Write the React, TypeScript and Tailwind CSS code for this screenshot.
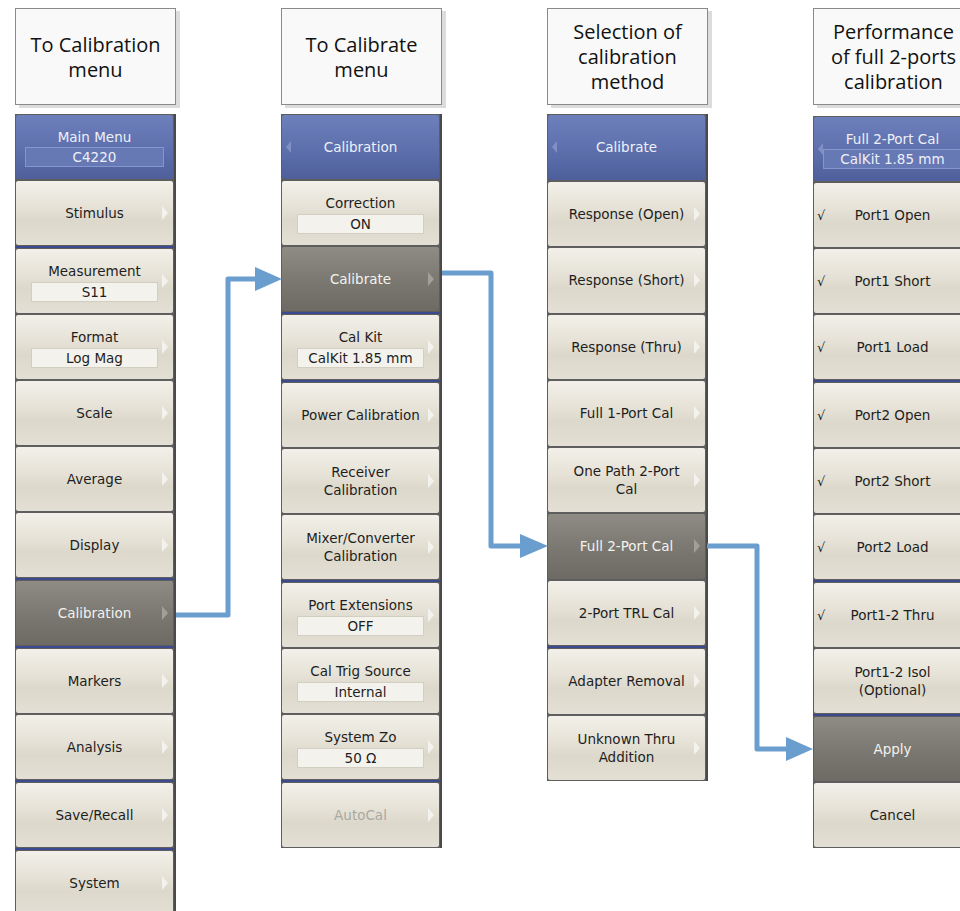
import React from "react";

type Kind = "beige" | "blue" | "dark" | "disabled";
interface Item {
  label?: string;
  value?: string;
  kind?: Kind;
  right?: boolean;
  left?: boolean;
  check?: boolean;
  sep?: boolean;
}

const SEP: Item = { sep: true };

const col1: Item[] = [
  { label: "Main Menu", value: "C4220", kind: "blue" },
  { label: "Stimulus", right: true },
  SEP,
  { label: "Measurement", value: "S11", right: true },
  { label: "Format", value: "Log Mag", right: true },
  { label: "Scale", right: true },
  { label: "Average", right: true },
  { label: "Display", right: true },
  SEP,
  { label: "Calibration", kind: "dark", right: true },
  SEP,
  { label: "Markers", right: true },
  { label: "Analysis", right: true },
  SEP,
  { label: "Save/Recall", right: true },
  SEP,
  { label: "System", right: true },
];

const col2: Item[] = [
  { label: "Calibration", kind: "blue", left: true },
  { label: "Correction", value: "ON" },
  { label: "Calibrate", kind: "dark", right: true },
  SEP,
  { label: "Cal Kit", value: "CalKit 1.85 mm", right: true },
  SEP,
  { label: "Power Calibration", right: true },
  { label: "Receiver\nCalibration", right: true },
  { label: "Mixer/Converter\nCalibration", right: true },
  SEP,
  { label: "Port Extensions", value: "OFF", right: true },
  { label: "Cal Trig Source", value: "Internal" },
  { label: "System Zo", value: "50 Ω", right: true },
  SEP,
  { label: "AutoCal", kind: "disabled", right: true },
];

const col3: Item[] = [
  { label: "Calibrate", kind: "blue", left: true },
  { label: "Response (Open)", right: true },
  { label: "Response (Short)", right: true },
  { label: "Response (Thru)", right: true },
  { label: "Full 1-Port Cal", right: true },
  { label: "One Path 2-Port\nCal", right: true },
  { label: "Full 2-Port Cal", kind: "dark", right: true },
  { label: "2-Port TRL Cal", right: true },
  SEP,
  { label: "Adapter Removal", right: true },
  { label: "Unknown Thru\nAddition", right: true },
];

const col4: Item[] = [
  { label: "Full 2-Port Cal", value: "CalKit 1.85 mm", kind: "blue", left: true },
  { label: "Port1 Open", check: true },
  { label: "Port1 Short", check: true },
  { label: "Port1 Load", check: true },
  SEP,
  { label: "Port2 Open", check: true },
  { label: "Port2 Short", check: true },
  { label: "Port2 Load", check: true },
  SEP,
  { label: "Port1-2 Thru", check: true },
  { label: "Port1-2 Isol\n(Optional)" },
  SEP,
  { label: "Apply", kind: "dark" },
  { label: "Cancel" },
];

function Btn({ it, tall }: { it: Item; tall?: boolean }) {
  const kind = it.kind ?? "beige";
  const bg =
    kind === "blue"
      ? "bg-[linear-gradient(to_bottom,#6d80bc_0%,#5e71ae_50%,#4e5f9b_100%)]"
      : kind === "dark"
      ? "bg-[linear-gradient(to_bottom,#8f8c85_0%,#7c7972_50%,#6d6a64_100%)]"
      : "bg-[linear-gradient(to_bottom,#f2f0e9_0%,#e6e2d7_40%,#dcd8cb_62%,#e3dfd4_100%)]";
  const txt =
    kind === "blue"
      ? "text-[#eef0f8]"
      : kind === "dark"
      ? "text-[#f2f2ef]"
      : kind === "disabled"
      ? "text-[#aaa8a1]"
      : "text-[#1e1e1e]";
  const twoLine = (it.label ?? "").includes("\n");
  return (
    <div
      className={`relative ${tall ? "h-[66.5px]" : "h-[66px]"} shrink-0 rounded-[3px] border border-[#5e5e5e] ${bg} ${txt} flex flex-col items-center justify-center`}
    >
      <div
        className={`whitespace-pre-line text-center ${twoLine ? "leading-[18px]" : "leading-[20px]"}`}
      >
        {it.label}
      </div>
      {it.value !== undefined && (
        <div
          className={`h-[20px] self-stretch flex items-center justify-center leading-[18px] ${
            kind === "blue"
              ? "mx-[9px] bg-[#6779b5] border border-[#8496cd]"
              : "mx-[15px] mt-px bg-[#f4f2ec] border border-[#d2cec1]"
          }`}
        >
          {it.value}
        </div>
      )}
      {it.right && (
        <div
          className={`absolute right-[5px] top-1/2 -translate-y-1/2 w-0 h-0 border-y-[7px] border-y-transparent border-l-[6px] ${
            kind === "dark" ? "border-l-[#a29f98]" : "border-l-[#f3f2ee]"
          }`}
        />
      )}
      {it.left && (
        <div className="absolute left-[4px] top-1/2 -translate-y-1/2 w-0 h-0 border-y-[6px] border-y-transparent border-r-[5px] border-r-[#8190c4]" />
      )}
      {it.check && (
        <div className="absolute left-[3px] top-1/2 -translate-y-1/2 text-[13px] leading-none text-[#222]">
          √
        </div>
      )}
    </div>
  );
}

function Column({
  title,
  items,
  tall,
  lower,
}: {
  title: string;
  items: Item[];
  tall?: boolean;
  lower?: boolean;
}) {
  return (
    <div className="w-[161px] shrink-0 flex flex-col">
      <div className="h-[97px] shrink-0 bg-[#f9f9f9] border border-[#8a8a8a] shadow-[4px_3px_0_#dcdcdc] flex items-center justify-center text-center whitespace-pre-line text-[20px] leading-[25px] text-[#111] font-['Open_Sans',sans-serif]">
        {title}
      </div>
      <div
        className={`${lower ? "mt-[11px]" : "mt-[9px]"} flex flex-col bg-[#5e5e5e] border-r-2 border-[#4a4a4a] text-[13.5px] font-['DejaVu_Sans',sans-serif]`}
      >
        {items.map((it, i) =>
          it.sep ? (
            <div key={i} className="h-[2px] shrink-0 bg-[#3c4b90]" />
          ) : (
            <Btn key={i} it={it} tall={tall} />
          )
        )}
      </div>
    </div>
  );
}

export default function App() {
  return (
    <div className="relative w-[960px] h-[911px] overflow-hidden bg-white">
      <div className="flex flex-row gap-[105px] pl-[15px] pt-[8px]">
        <Column title={"To Calibration\nmenu"} items={col1} />
        <Column title={"To Calibrate\nmenu"} items={col2} />
        <Column title={"Selection of\ncalibration\nmethod"} items={col3} tall />
        <Column title={"Performance\nof full 2-ports\ncalibration"} items={col4} lower />
      </div>
      <svg
        className="absolute left-0 top-0 pointer-events-none"
        width="960"
        height="911"
        viewBox="0 0 960 911"
      >
        <g stroke="#6a9ecf" strokeWidth="5" fill="none" strokeLinejoin="round">
          <path d="M176 615 H228 V279 H258" />
          <path d="M442 273 H491 V546 H522" />
          <path d="M707 546 H757 V749 H788" />
        </g>
        <g fill="#6a9ecf">
          <polygon points="255,267 282,279 255,291" />
          <polygon points="520,534 548,546 520,558" />
          <polygon points="786,737 813,749 786,761" />
        </g>
      </svg>
    </div>
  );
}
